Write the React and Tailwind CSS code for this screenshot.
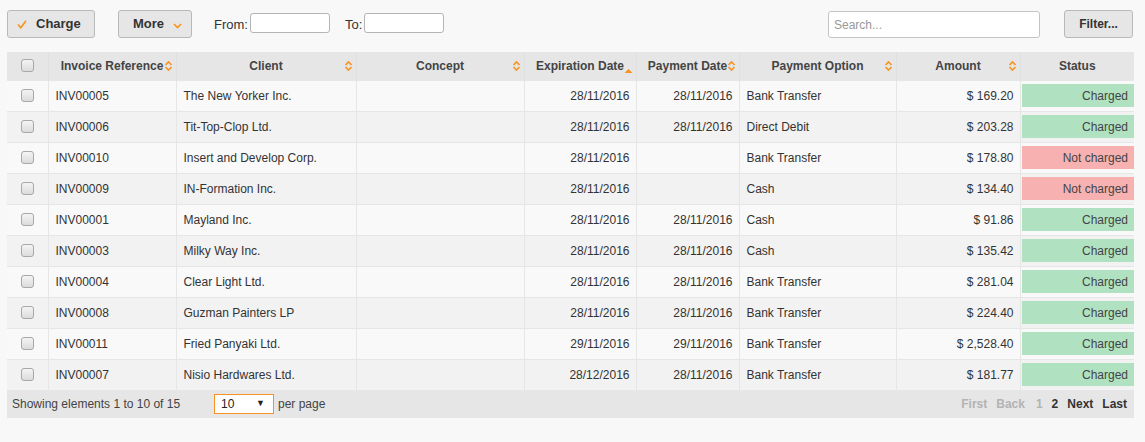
import React from 'react';

const rows = [
  { ref: 'INV00005', client: 'The New Yorker Inc.', exp: '28/11/2016', pay: '28/11/2016', opt: 'Bank Transfer', amount: '$ 169.20', charged: true },
  { ref: 'INV00006', client: 'Tit-Top-Clop Ltd.', exp: '28/11/2016', pay: '28/11/2016', opt: 'Direct Debit', amount: '$ 203.28', charged: true },
  { ref: 'INV00010', client: 'Insert and Develop Corp.', exp: '28/11/2016', pay: '', opt: 'Bank Transfer', amount: '$ 178.80', charged: false },
  { ref: 'INV00009', client: 'IN-Formation Inc.', exp: '28/11/2016', pay: '', opt: 'Cash', amount: '$ 134.40', charged: false },
  { ref: 'INV00001', client: 'Mayland Inc.', exp: '28/11/2016', pay: '28/11/2016', opt: 'Cash', amount: '$ 91.86', charged: true },
  { ref: 'INV00003', client: 'Milky Way Inc.', exp: '28/11/2016', pay: '28/11/2016', opt: 'Cash', amount: '$ 135.42', charged: true },
  { ref: 'INV00004', client: 'Clear Light Ltd.', exp: '28/11/2016', pay: '28/11/2016', opt: 'Bank Transfer', amount: '$ 281.04', charged: true },
  { ref: 'INV00008', client: 'Guzman Painters LP', exp: '28/11/2016', pay: '28/11/2016', opt: 'Bank Transfer', amount: '$ 224.40', charged: true },
  { ref: 'INV00011', client: 'Fried Panyaki Ltd.', exp: '29/11/2016', pay: '29/11/2016', opt: 'Bank Transfer', amount: '$ 2,528.40', charged: true },
  { ref: 'INV00007', client: 'Nisio Hardwares Ltd.', exp: '28/12/2016', pay: '28/11/2016', opt: 'Bank Transfer', amount: '$ 181.77', charged: true },
];

const SortBoth = () => (
  <svg width="9" height="11" viewBox="0 0 9 11" className="absolute right-[3px] top-1/2 -translate-y-1/2">
    <path d="M1.5 4.5 L4.5 1.5 L7.5 4.5" fill="none" stroke="#f7931e" strokeWidth="1.6" />
    <path d="M1.5 6.5 L4.5 9.5 L7.5 6.5" fill="none" stroke="#f7931e" strokeWidth="1.6" />
  </svg>
);

const SortUp = () => (
  <svg width="9" height="6" viewBox="0 0 9 6" className="absolute right-[3px] top-[16px]">
    <path d="M0.5 5 L4.5 1 L8.5 5 Z" fill="#f7931e" />
  </svg>
);

const Checkbox = () => (
  <div className="mx-auto h-[13px] w-[13px] rounded-[3px] border border-[#a8a8a8] bg-gradient-to-b from-[#f4f4f4] to-[#dcdcdc]" />
);

const Th = ({ children, sort }) => (
  <th className="relative h-[28px] border-r border-[#e0e0e0] px-1 text-center font-bold text-[#444]">
    {children}
    {sort === 'both' && <SortBoth />}
    {sort === 'up' && <SortUp />}
  </th>
);

export default function App() {
  return (
    <div className="min-h-[442px] w-[1145px] bg-[#f8f8f8] text-[12px] text-[#333]" style={{ fontFamily: '"Liberation Sans", Arial, sans-serif' }}>
      <div className="flex h-[52px] items-start pl-[7px] pr-[12px] pt-[10px]">
        <button className="flex h-[28px] w-[88px] items-center rounded-[3px] border border-[#b9b9b9] bg-[#e6e6e6] pl-[9px] font-bold text-[#333]">
          <svg width="10" height="9" viewBox="0 0 10 9" className="mr-[9px]">
            <path d="M1 4.5 L3.8 7.8 L9 0.8" fill="none" stroke="#f7931e" strokeWidth="1.6" />
          </svg>
          <span className="text-[13px]">Charge</span>
        </button>
        <button className="ml-[23px] flex h-[28px] w-[74px] items-center rounded-[3px] border border-[#b9b9b9] bg-[#e6e6e6] pl-[14px] font-bold text-[#333]">
          <span className="text-[13px]">More</span>
          <svg width="9" height="6" viewBox="0 0 9 6" className="ml-[9px] mt-[4px]">
            <path d="M1 1 L4.5 4.5 L8 1" fill="none" stroke="#f7931e" strokeWidth="1.6" />
          </svg>
        </button>
        <span className="ml-[22px] mt-[5px] text-[13px] text-[#333]">From:</span>
        <input className="ml-[2px] mt-[3px] h-[20px] w-[80px] rounded-[3px] border border-[#b5b5b5] bg-white" />
        <span className="ml-[15px] mt-[5px] text-[13px] text-[#333]">To:</span>
        <input className="ml-[2px] mt-[3px] h-[20px] w-[80px] rounded-[3px] border border-[#b5b5b5] bg-white" />
        <input placeholder="Search..." className="ml-auto mt-[1px] h-[27px] w-[212px] rounded-[3px] border border-[#c4c4c4] bg-white px-[5px] text-[12px] placeholder:text-[#999]" />
        <button className="ml-[24px] h-[28px] w-[69px] rounded-[3px] border border-[#b9b9b9] bg-[#e6e6e6] font-bold text-[#333]">Filter...</button>
      </div>

      <div className="ml-[7px] w-[1127px]">
        <table className="w-[1127px] table-fixed border-collapse">
          <colgroup>
            <col className="w-[41px]" />
            <col className="w-[128px]" />
            <col className="w-[180px]" />
            <col className="w-[168px]" />
            <col className="w-[112px]" />
            <col className="w-[103px]" />
            <col className="w-[157px]" />
            <col className="w-[124px]" />
            <col className="w-[114px]" />
          </colgroup>
          <thead className="bg-[#e6e6e6]">
            <tr>
              <th className="h-[28px] border-r border-[#e0e0e0]"><Checkbox /></th>
              <Th sort="both">Invoice Reference</Th>
              <Th sort="both">Client</Th>
              <Th sort="both">Concept</Th>
              <Th sort="up">Expiration Date</Th>
              <Th sort="both">Payment Date</Th>
              <Th sort="both">Payment Option</Th>
              <Th sort="both">Amount</Th>
              <th className="h-[28px] text-center font-bold text-[#444]">Status</th>
            </tr>
          </thead>
          <tbody>
            {rows.map((r, i) => (
              <tr key={r.ref} className={i % 2 === 0 ? 'bg-[#f9f9f9]' : 'bg-[#f2f2f2]'}>
                <td className="h-[31px] border-r border-t border-[#e6e6e6]"><Checkbox /></td>
                <td className="border-r border-t border-[#e6e6e6] px-[7px]">{r.ref}</td>
                <td className="border-r border-t border-[#e6e6e6] px-[7px]">{r.client}</td>
                <td className="border-r border-t border-[#e6e6e6] px-[7px]"></td>
                <td className="border-r border-t border-[#e6e6e6] px-[6px] text-right">{r.exp}</td>
                <td className="border-r border-t border-[#e6e6e6] px-[6px] text-right">{r.pay}</td>
                <td className="border-r border-t border-[#e6e6e6] px-[7px]">{r.opt}</td>
                <td className="border-r border-t border-[#e6e6e6] px-[6px] text-right">{r.amount}</td>
                <td className="border-t border-[#e6e6e6] py-[3px] pl-px">
                  <div className={`flex h-[23px] items-center justify-end pr-[6px] text-[#444] ${r.charged ? 'bg-[#b0e2c2]' : 'bg-[#f7b1b1]'}`}>
                    {r.charged ? 'Charged' : 'Not charged'}
                  </div>
                </td>
              </tr>
            ))}
          </tbody>
        </table>
        <div className="flex h-[28px] items-center bg-[#e6e6e6] pl-[5px] pr-[7px]">
          <span className="w-[202px] text-[#444]">Showing elements 1 to 10 of 15</span>
          <div className="flex h-[20px] w-[60px] items-center justify-between border border-[#f7931e] bg-white pl-[6px] pr-[8px]">
            <span className="text-[#222]">10</span>
            <span className="text-[9px] text-[#222]">▼</span>
          </div>
          <span className="ml-[4px] text-[#444]">per page</span>
          <div className="ml-auto flex items-center gap-[9px] font-bold">
            <span className="text-[#b3b3b3]">First</span>
            <span className="text-[#b3b3b3]">Back</span>
            <span className="ml-[2px] text-[#b3b3b3]">1</span>
            <span className="text-[#333]">2</span>
            <span className="text-[#333]">Next</span>
            <span className="text-[#333]">Last</span>
          </div>
        </div>
      </div>
    </div>
  );
}
